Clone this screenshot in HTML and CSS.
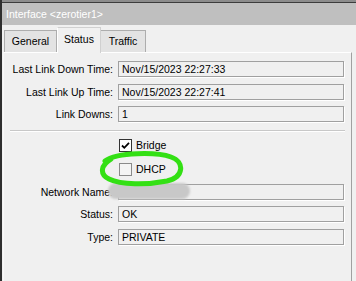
FILE: index.html
```html
<!DOCTYPE html>
<html>
<head>
<meta charset="utf-8">
<link rel="stylesheet" href="styles.css">
</head>
<body>
<div class="window">
  <div class="topline"></div>
  <div class="title">Interface &lt;zerotier1&gt;</div>
  <div class="body">
    <div class="tabs">
      <div class="tab">General</div>
      <div class="tab active">Status</div>
      <div class="tab">Traffic</div>
    </div>
    <div class="panel">
      <div class="form">
        <div class="label">Last Link Down Time:</div>
        <div class="field">Nov/15/2023 22:27:33</div>
        <div class="label">Last Link Up Time:</div>
        <div class="field">Nov/15/2023 22:27:41</div>
        <div class="label">Link Downs:</div>
        <div class="field">1</div>
      </div>
      <div class="sep"></div>
      <div class="checks">
        <div class="check"><span class="box checked"><svg width="11" height="11" viewBox="0 0 11 11"><path d="M2 5.5 L4.3 7.8 L9 2.8" fill="none" stroke="#000" stroke-width="1.8"/></svg></span><span>Bridge</span></div>
        <div class="check"><span class="box light"></span><span>DHCP</span></div>
      </div>
      <div class="form form2">
        <div class="label">Network Name:</div>
        <div class="field"></div>
        <div class="label">Status:</div>
        <div class="field">OK</div>
        <div class="label">Type:</div>
        <div class="field">PRIVATE</div>
      </div>
      <div class="smudge"></div>
      <svg class="circle" width="100" height="50" viewBox="0 0 100 50">
        <path d="M8 10 C 20 1, 60 1, 74 6 C 88 11, 87 26, 70 30 C 50 34, 24 34, 12 28 C 2 23, 4 14, 14 8" fill="none" stroke="#33e014" stroke-width="5" stroke-linecap="round"/>
      </svg>
    </div>
  </div>
</div>
</body>
</html>
```
FILE: styles.css
```css
* { box-sizing: border-box; }
html, body { margin: 0; padding: 0; }
body {
  width: 356px;
  height: 281px;
  overflow: hidden;
  background: #f0f0f0;
  font-family: "Liberation Sans", Arial, sans-serif;
  font-size: 10.5px;
  color: #000;
}
.window {
  height: 281px;
  border-left: 2px solid #2e2e2e;
  display: flex;
  flex-direction: column;
}
.topline {
  height: 3px;
  background: #8c8c8c;
  border-bottom: 1px solid #3c3c3c;
}
.title {
  height: 22px;
  background: #bfbfbf;
  color: #fff;
  line-height: 22px;
  padding-left: 4px;
  font-size: 10.5px;
}
.body {
  flex: 1;
  display: flex;
  flex-direction: column;
  padding: 2px 4px 0 1px;
}
.tabs {
  display: flex;
  align-items: flex-end;
  height: 25px;
  padding-left: 1px;
  position: relative;
  z-index: 1;
}
.tab {
  height: 22px;
  line-height: 21px;
  text-align: center;
  background: #e3e3e3;
  border: 1px solid #adadad;
  border-bottom: none;
}
.tab:nth-child(1) { width: 53px; }
.tab:nth-child(2) { width: 44px; }
.tab:nth-child(3) { width: 45px; border-left: none; }
.tab.active {
  height: 26px;
  line-height: 23px;
  background: #f0f0f0;
  margin-bottom: -1px;
  border-color: #d0d0d0;
  border-left-color: #fff;
}
.panel {
  flex: 1;
  position: relative;
  border-top: 1px solid #fff;
  border-left: 1px solid #f8f8f8;
  border-right: 1px solid #a0a0a0;
  padding-top: 8px;
}
.form {
  display: grid;
  grid-template-columns: 109px 226px;
  column-gap: 5px;
  row-gap: 6.5px;
}
.label {
  text-align: right;
  height: 16px;
  line-height: 16px;
}
.field {
  height: 16px;
  line-height: 14px;
  padding-left: 3px;
  border: 1px solid #a0a0a0;
  background: #f0f0f0;
  box-shadow: 1px 1px 0 #fff;
}
.sep {
  margin: 7.5px 6px 0 6px;
  height: 2px;
  border-top: 1px solid #c8c8c8;
  border-bottom: 1px solid #fff;
}
.checks {
  display: flex;
  flex-direction: column;
  gap: 11px;
  padding-left: 115px;
  margin-top: 7px;
}
.check {
  display: flex;
  align-items: center;
  gap: 4px;
  height: 13px;
}
.box {
  width: 13px;
  height: 13px;
  border: 1px solid #333;
  background: #fff;
  display: flex;
  align-items: center;
  justify-content: center;
}
.box.light {
  border-color: #8a8a8a;
  background: #f4f4f4;
}
.form2 { margin-top: 8px; }
.smudge {
  position: absolute;
  left: 104px;
  top: 130px;
  width: 82px;
  height: 16px;
  border-radius: 8px;
  background: #c8c8c8;
  filter: blur(1.2px);
}
.circle {
  position: absolute;
  left: 93px;
  top: 98px;
}
```
